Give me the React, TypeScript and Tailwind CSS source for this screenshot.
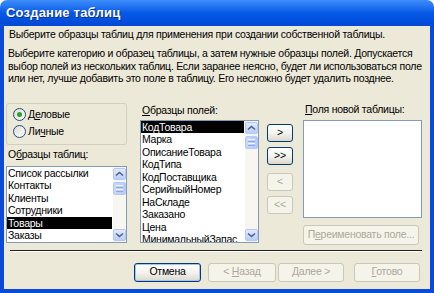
import React from 'react'

const tableItems = ['Список рассылки', 'Контакты', 'Клиенты', 'Сотрудники', 'Товары', 'Заказы']
const fieldItems = [
  'КодТовара',
  'Марка',
  'ОписаниеТовара',
  'КодТипа',
  'КодПоставщика',
  'СерийныйНомер',
  'НаСкладе',
  'Заказано',
  'Цена',
  'МинимальныйЗапас',
]

function Arrow({ down }: { down?: boolean }) {
  return (
    <svg width="9" height="6" viewBox="0 0 9 6">
      <path
        d={down ? 'M1 1.5 L4.5 4.5 L8 1.5' : 'M1 4.5 L4.5 1.5 L8 4.5'}
        fill="none"
        stroke="#4d6185"
        strokeWidth="1.6"
      />
    </svg>
  )
}

function ScrollBar() {
  return (
    <div className="flex flex-col w-[13px] h-full bg-[#f7f6f1] py-[1px]">
      <div className="h-[12px] flex items-center justify-center rounded-[2px] border border-[#b5c7f3] bg-gradient-to-b from-[#e1eafe] to-[#b9cdf8]">
        <Arrow />
      </div>
      <div className="mt-[2px] h-[13px] flex flex-col items-center justify-center gap-[1px] rounded-[2px] border border-[#b5c7f3] bg-gradient-to-r from-[#c9d8fc] to-[#b7cbf7]">
        <div className="w-[7px] h-[1px] bg-[#eef3ff]" />
        <div className="w-[7px] h-[1px] bg-[#8fa8e0]" />
        <div className="w-[7px] h-[1px] bg-[#eef3ff]" />
        <div className="w-[7px] h-[1px] bg-[#8fa8e0]" />
      </div>
      <div className="flex-1" />
      <div className="h-[12px] flex items-center justify-center rounded-[2px] border border-[#b5c7f3] bg-gradient-to-b from-[#e1eafe] to-[#b9cdf8]">
        <Arrow down />
      </div>
    </div>
  )
}

function ListBox({ items, selected, className }: { items: string[]; selected: number; className: string }) {
  return (
    <div className={`flex border border-[#7f9db9] bg-white overflow-hidden ${className}`}>
      <div className="flex-1 overflow-hidden">
        {items.map((it, i) => (
          <div
            key={it}
            className={`h-[12.5px] leading-[12.5px] pl-[1px] whitespace-nowrap ${
              i === selected ? 'bg-black text-white' : 'text-black'
            }`}
          >
            {it}
          </div>
        ))}
      </div>
      <div className="pl-[1px]">
        <ScrollBar />
      </div>
    </div>
  )
}

function Btn({
  children,
  disabled,
  def,
  className,
}: {
  children: React.ReactNode
  disabled?: boolean
  def?: boolean
  className: string
}) {
  const look = disabled
    ? 'border-[#c9c7ba] bg-[#f5f4ea] text-[#aca899]'
    : 'border-[#003c74] bg-gradient-to-b from-white via-[#f4f3ee] to-[#dcd8cd] text-black'
  return (
    <div
      className={`flex items-center justify-center rounded-[3px] border whitespace-nowrap ${look} ${
        def ? 'shadow-[inset_0_0_0_1px_#a8c2ee]' : ''
      } ${className}`}
    >
      <span>{children}</span>
    </div>
  )
}

function Radio({ checked, children }: { checked?: boolean; children: React.ReactNode }) {
  return (
    <div className="flex items-center h-[14px]">
      <span className="w-[13px] h-[13px] rounded-full border border-[#1c5180] bg-gradient-to-br from-[#dcd9d0] to-white flex items-center justify-center">
        {checked && <span className="w-[5px] h-[5px] rounded-full bg-[#2aa12a]" />}
      </span>
      <span className="ml-[2px]">{children}</span>
    </div>
  )
}

export default function App() {
  return (
    <div className="w-[434px] h-[293px] bg-white flex flex-col font-['Liberation_Sans',Arial,sans-serif] text-[10.5px] tracking-[-0.25px] text-black">
      <div className="h-[26px] shrink-0 rounded-t-[7px] bg-gradient-to-b from-[#3d8dfb] via-[#0559e6] to-[#0248d6] flex items-center pl-[6px]">
        <span className="text-white font-bold text-[13px] tracking-[0.2px] [text-shadow:1px_1px_#0a2e9c]">
          Создание таблиц
        </span>
      </div>

      <div className="flex-1 flex flex-col bg-[#ece9d8] border-x-[4px] border-b-[4px] border-[#0a4ad9]">
        <div className="pl-[5px] pt-[2px] leading-[13px] whitespace-nowrap">
          Выберите образцы таблиц для применения при создании собственной таблицы.
        </div>
        <div className="pl-[4px] mt-[6px] leading-[12.5px] whitespace-nowrap">
          Выберите категорию и образец таблицы, а затем нужные образцы полей. Допускается
          <br />
          выбор полей из нескольких таблиц. Если заранее неясно, будет ли использоваться поле
          <br />
          или нет, лучше добавить это поле в таблицу. Его несложно будет удалить позднее.
        </div>

        <div className="flex items-start mt-[16px] pl-[2px]">
          <div className="w-[121px] flex flex-col">
            <div className="mt-[2px] h-[42px] rounded-[3px] border border-[#d0d0bf] pl-[6px] pt-[4px] flex flex-col gap-[3px]">
              <Radio checked>
                Д<span className="underline">е</span>ловые
              </Radio>
              <Radio>
                Ли<span className="underline">ч</span>ные
              </Radio>
            </div>
            <div className="mt-[3px] leading-[12px] pl-[2px]">
              О<span className="underline">б</span>разцы таблиц:
            </div>
            <ListBox items={tableItems} selected={4} className="mt-[6px] h-[77px]" />
          </div>

          <div className="ml-[13px] w-[119px] flex flex-col">
            <div className="mt-[3px] leading-[12px] pl-[2px]">
              <span className="underline">О</span>бразцы полей:
            </div>
            <ListBox items={fieldItems} selected={0} className="mt-[4px] h-[123px]" />
          </div>

          <div className="ml-[8px] w-[26px] flex flex-col pt-[23px]">
            <Btn className="h-[18px]">&gt;</Btn>
            <Btn className="h-[18px] mt-[5px]">&gt;&gt;</Btn>
            <Btn disabled className="h-[18px] mt-[8px]">&lt;</Btn>
            <Btn disabled className="h-[18px] mt-[5px]">&lt;&lt;</Btn>
          </div>

          <div className="ml-[10px] w-[119px] flex flex-col">
            <div className="mt-[2px] leading-[12px] pl-[2px]">
              <span className="underline">П</span>оля новой таблицы:
            </div>
            <div className="mt-[5px] h-[98px] border border-[#7f9db9] bg-white" />
            <Btn disabled className="mt-[7px] h-[20px] w-[116px]">
              П<span className="underline">е</span>реименовать поле...
            </Btn>
          </div>
        </div>

        <div className="mt-[5px] ml-[6px] mr-[8px] border-t border-[#222] border-b border-b-white" />

        <div className="mt-[11px] flex justify-end pr-[10px]">
          <Btn def className="w-[67px] h-[19px]">Отмена</Btn>
          <Btn disabled className="ml-[7px] w-[68px] h-[19px]">
            &lt; <span className="underline">Н</span>азад
          </Btn>
          <Btn disabled className="ml-[2px] w-[66px] h-[19px]">
            <span className="underline">Д</span>алее &gt;
          </Btn>
          <Btn disabled className="ml-[10px] w-[66px] h-[19px]">
            <span className="underline">Г</span>отово
          </Btn>
        </div>
      </div>
    </div>
  )
}
